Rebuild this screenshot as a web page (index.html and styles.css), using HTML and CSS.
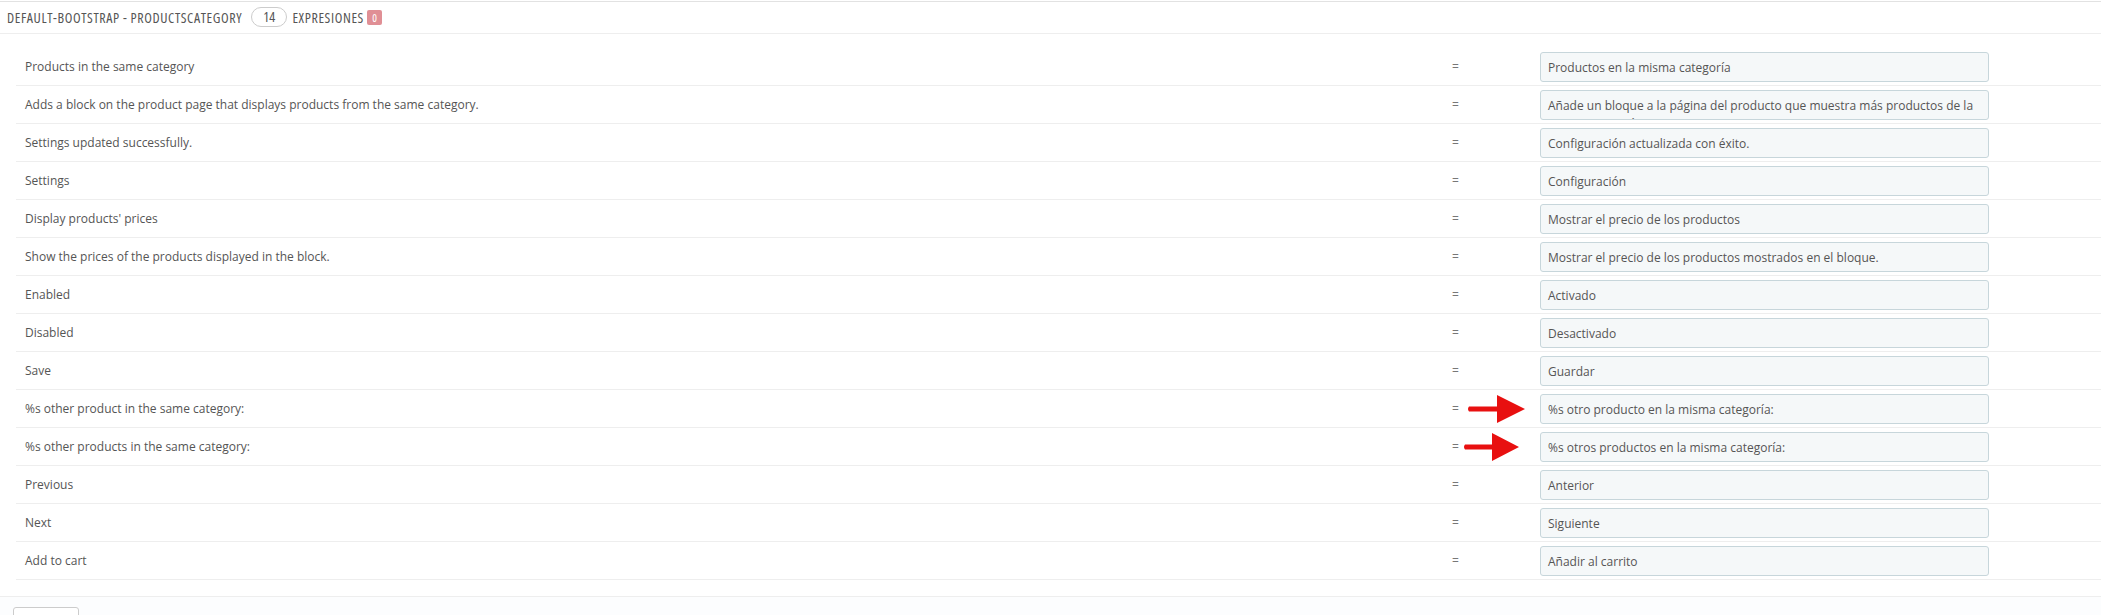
FILE: index.html
```html
<!DOCTYPE html>
<html lang="es">
  <head>
    <meta charset="UTF-8" />
    <title>Traducciones - productscategory</title>
    <link rel="stylesheet" href="styles.css">
  </head>
  <body>
    <div class="panel">
      <div class="panel-heading">
        DEFAULT-BOOTSTRAP - PRODUCTSCATEGORY <span class="badge">14</span> EXPRESIONES <span class="badge-missing">0</span>
      </div>

      <div class="panel-body">
        <div class="tr-row">
          <div class="tr-source">Products in the same category</div>
          <div class="tr-eq">=</div>
          <textarea class="tr-input">Productos en la misma categoría</textarea>
        </div>
        <div class="tr-row">
          <div class="tr-source">Adds a block on the product page that displays products from the same category.</div>
          <div class="tr-eq">=</div>
          <textarea class="tr-input">Añade un bloque a la página del producto que muestra más productos de la misma categoría.</textarea>
        </div>
        <div class="tr-row">
          <div class="tr-source">Settings updated successfully.</div>
          <div class="tr-eq">=</div>
          <textarea class="tr-input">Configuración actualizada con éxito.</textarea>
        </div>
        <div class="tr-row">
          <div class="tr-source">Settings</div>
          <div class="tr-eq">=</div>
          <textarea class="tr-input">Configuración</textarea>
        </div>
        <div class="tr-row">
          <div class="tr-source">Display products' prices</div>
          <div class="tr-eq">=</div>
          <textarea class="tr-input">Mostrar el precio de los productos</textarea>
        </div>
        <div class="tr-row">
          <div class="tr-source">Show the prices of the products displayed in the block.</div>
          <div class="tr-eq">=</div>
          <textarea class="tr-input">Mostrar el precio de los productos mostrados en el bloque.</textarea>
        </div>
        <div class="tr-row">
          <div class="tr-source">Enabled</div>
          <div class="tr-eq">=</div>
          <textarea class="tr-input">Activado</textarea>
        </div>
        <div class="tr-row">
          <div class="tr-source">Disabled</div>
          <div class="tr-eq">=</div>
          <textarea class="tr-input">Desactivado</textarea>
        </div>
        <div class="tr-row">
          <div class="tr-source">Save</div>
          <div class="tr-eq">=</div>
          <textarea class="tr-input">Guardar</textarea>
        </div>
        <div class="tr-row">
          <div class="tr-source">%s other product in the same category:</div>
          <div class="tr-eq">=
            <svg class="arrow" width="60" height="28" viewBox="0 0 60 28"><path d="M3 11.5 H31 V0 L59 14 L31 28 V16.5 H3 Q1 14 3 11.5 Z" fill="#e81010"/></svg>
          </div>
          <textarea class="tr-input">%s otro producto en la misma categoría:</textarea>
        </div>
        <div class="tr-row">
          <div class="tr-source">%s other products in the same category:</div>
          <div class="tr-eq">=
            <svg class="arrow arrow-b" width="60" height="28" viewBox="0 0 60 28"><path d="M3 11.5 H30 V0 L57 14 L30 28 V16.5 H3 Q1 14 3 11.5 Z" fill="#e81010"/></svg>
          </div>
          <textarea class="tr-input">%s otros productos en la misma categoría:</textarea>
        </div>
        <div class="tr-row">
          <div class="tr-source">Previous</div>
          <div class="tr-eq">=</div>
          <textarea class="tr-input">Anterior</textarea>
        </div>
        <div class="tr-row">
          <div class="tr-source">Next</div>
          <div class="tr-eq">=</div>
          <textarea class="tr-input">Siguiente</textarea>
        </div>
        <div class="tr-row">
          <div class="tr-source">Add to cart</div>
          <div class="tr-eq">=</div>
          <textarea class="tr-input">Añadir al carrito</textarea>
        </div>
      </div>

      <div class="panel-footer">
        <button class="btn" aria-label="Guardar"></button>
      </div>
    </div>
  </body>
</html>
```

FILE: styles.css
```css
/* Base */
body { margin: 0; background-color: #fff; font-family: "Open Sans", "DejaVu Sans", sans-serif; font-size: 12px; color: #555; }

/* Panel */
.panel { margin-top: 1px; border-top: 1px solid #e2e2e2; }
.panel-heading { height: 31px; line-height: 31px; padding: 0 7px; border-bottom: 1px solid #eee; font-family: "Liberation Sans Narrow", "Open Sans", sans-serif; font-stretch: condensed; font-size: 14px; letter-spacing: 0.6px; color: #555; white-space: nowrap; }
.badge { display: inline-block; height: 18px; line-height: 18px; padding: 0 11px; margin: 0 2px 0 6px; border: 1px solid #ccc; border-radius: 10px; background-color: #fff; font-size: 14px; letter-spacing: 0; vertical-align: 1px; }
.badge-missing { display: inline-block; height: 15px; line-height: 15px; padding: 0 5px; border-radius: 2px; background-color: #e08f95; color: #fff; font-size: 11px; letter-spacing: 0; vertical-align: 1px; }

.panel-body { padding: 14px 0 16px 16px; }

/* Translation rows */
.tr-row { display: grid; grid-template-columns: 1424px 100px 449px 1fr; height: 37px; border-bottom: 1px solid #eee; }
.tr-source { align-self: center; padding-left: 9px; white-space: nowrap; }
.tr-eq { position: relative; align-self: center; padding-left: 12px; color: #777; }
.tr-input { box-sizing: border-box; width: 449px; height: 30px; margin-top: 4px; padding: 6px 7px; border: 1px solid #c7d6db; border-radius: 3px; background-color: #f5f8f9; font-family: "Open Sans", sans-serif; font-size: 12px; line-height: 18px; color: #555; resize: none; overflow: hidden; }

/* Annotation arrows */
.arrow { position: absolute; left: 26px; top: 50%; margin-top: -14px; }
.arrow-b { left: 22px; }

/* Footer */
.panel-footer { border-top: 1px solid #eee; background-color: #fcfdfe; padding: 10px 13px; }
.btn { width: 66px; height: 32px; border: 1px solid #ccc; border-radius: 3px; background-color: #fff; }
```
